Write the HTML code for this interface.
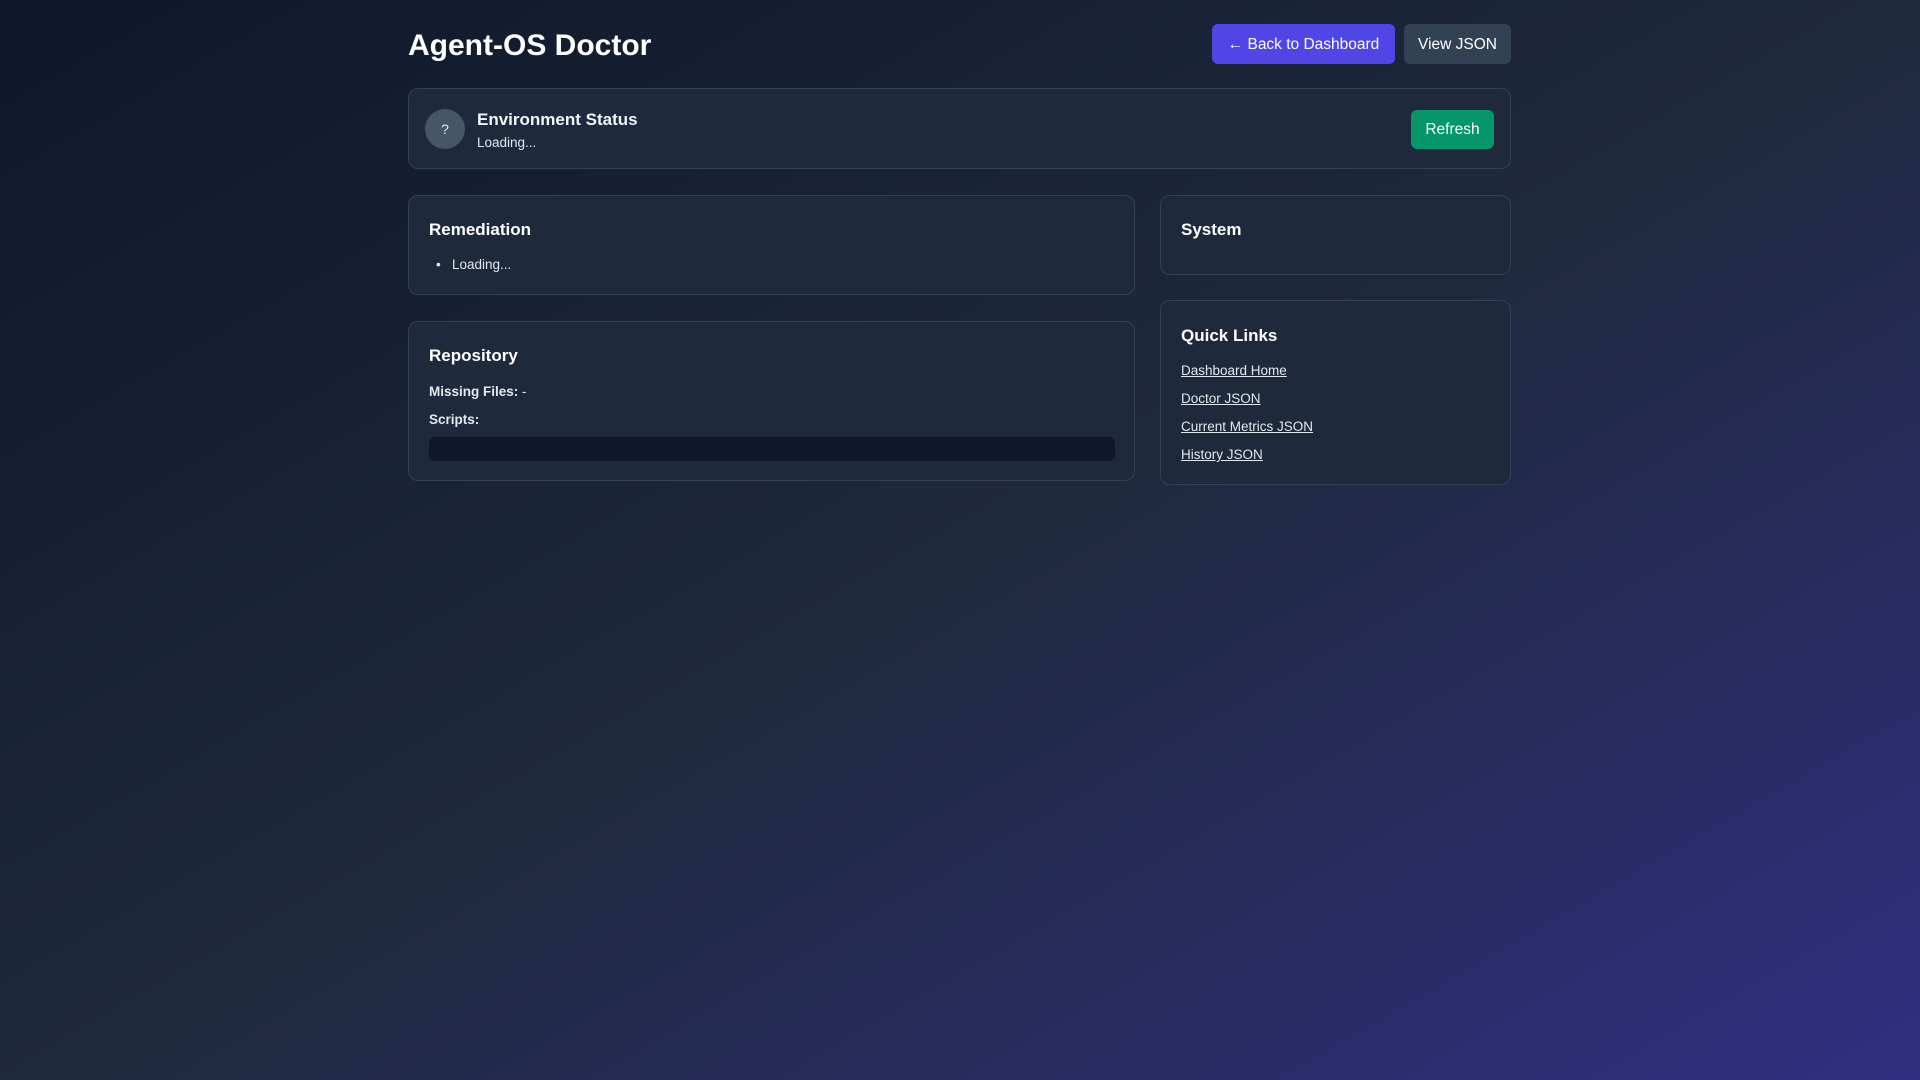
<!DOCTYPE html>
<html><head><meta charset="utf-8"><style>
*{box-sizing:border-box;margin:0;padding:0}
body{width:1920px;height:1080px;overflow:hidden;font-family:"Liberation Sans",sans-serif;color:#f1f5f9;
background:linear-gradient(150deg,#0f172a 0%,#1e293b 50%,#312e81 100%);position:relative}
.a{position:absolute}
h1{position:absolute;left:408px;top:29px;font-size:30px;font-weight:bold;color:#fff}
.btn{position:absolute;border-radius:6px;color:#fff;font-size:15.5px;display:flex;align-items:center;justify-content:center;padding-top:1px}
.card{position:absolute;background:#1e293b;border:1px solid #334155;border-radius:10px}
.h{position:absolute;left:20px;font-size:17px;font-weight:bold;color:#fff}
.t{position:absolute;font-size:13.5px;color:#e2e8f0}
a{color:#e2e8f0;text-decoration:underline}
</style></head><body>
<h1>Agent-OS Doctor</h1>
<div class="btn" style="left:1212px;top:24px;width:183px;height:40px;background:#4f46e5">← Back to Dashboard</div>
<div class="btn" style="left:1404px;top:24px;width:107px;height:40px;background:#334155">View JSON</div>

<div class="card" style="left:408px;top:88px;width:1103px;height:81px">
 <div class="a" style="left:16px;top:20px;width:40px;height:40px;border-radius:50%;background:#475569;color:#e2e8f0;font-size:14px;display:flex;align-items:center;justify-content:center">?</div>
 <div class="a" style="left:68px;top:21px;font-size:17px;font-weight:bold">Environment Status</div>
 <div class="a" style="left:68px;top:46px;font-size:13.5px;color:#e2e8f0">Loading...</div>
 <div class="btn" style="left:1002px;top:21px;width:83px;height:39px;background:#059669">Refresh</div>
</div>

<div class="card" style="left:408px;top:195px;width:727px;height:100px">
 <div class="h" style="top:24px">Remediation</div>
 <div class="t" style="left:27px;top:61px">•&nbsp;&nbsp;&nbsp;Loading...</div>
</div>
<div class="card" style="left:408px;top:321px;width:727px;height:160px">
 <div class="h" style="top:24px">Repository</div>
 <div class="t" style="left:20px;top:62px;font-weight:bold">Missing Files: <span style="font-weight:normal">-</span></div>
 <div class="t" style="left:20px;top:90px;font-weight:bold">Scripts:</div>
 <div class="a" style="left:20px;top:115px;width:686px;height:24px;background:#0f172a;border-radius:6px"></div>
</div>
<div class="card" style="left:1160px;top:195px;width:351px;height:80px">
 <div class="h" style="top:24px">System</div>
</div>
<div class="card" style="left:1160px;top:300px;width:351px;height:185px">
 <div class="h" style="top:25px">Quick Links</div>
 <div class="t" style="left:20px;top:62px"><a>Dashboard Home</a></div>
 <div class="t" style="left:20px;top:90px"><a>Doctor JSON</a></div>
 <div class="t" style="left:20px;top:118px"><a>Current Metrics JSON</a></div>
 <div class="t" style="left:20px;top:146px"><a>History JSON</a></div>
</div>
</body></html>
